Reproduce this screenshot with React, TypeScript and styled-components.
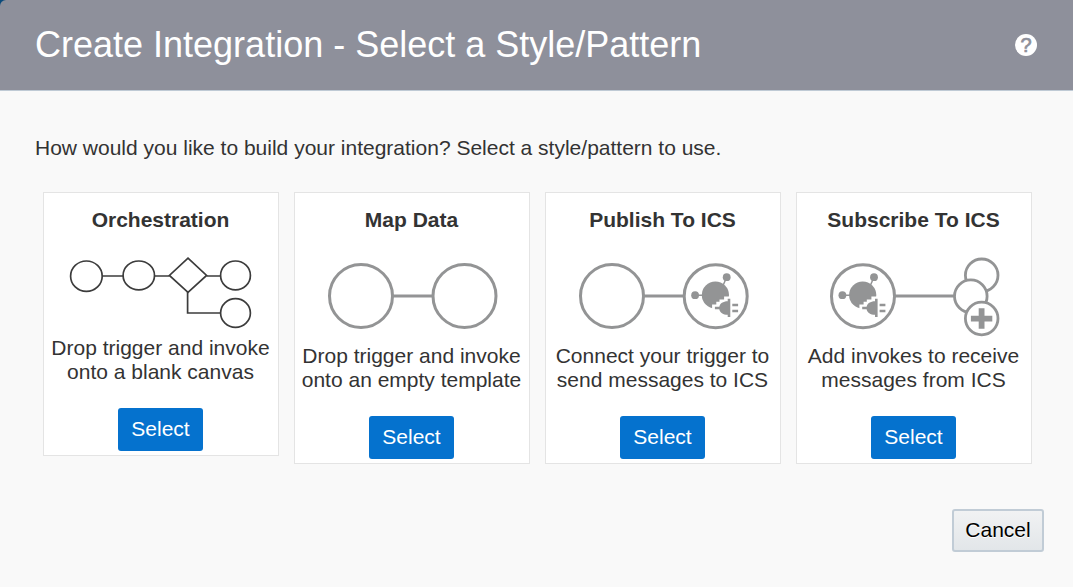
import React from 'react';
import styled, { createGlobalStyle } from 'styled-components';

const GlobalStyle = createGlobalStyle`
  * { box-sizing: border-box; }
  body {
    margin: 0;
    background: #f9f9f9;
    font-family: "Liberation Sans", Arial, sans-serif;
    font-size: 21px;
    line-height: 24px;
    color: #333;
  }
`;

const Dialog = styled.div`
  display: flex;
  flex-direction: column;
  width: 1073px;
  height: 587px;
  background: #f9f9f9;
`;

const HeaderBackdrop = styled.div`
  background: #0b4a7a;
`;

const Header = styled.header`
  display: flex;
  align-items: center;
  justify-content: space-between;
  height: 91px;
  padding: 0 36px 0 35px;
  background: #8e909b;
  border-bottom: 1px solid #bfcad5;
  border-top-left-radius: 6px;
`;

const Title = styled.h1`
  margin: 0;
  font-size: 36px;
  font-weight: 400;
  line-height: 42px;
  color: #fff;
`;

const HelpButton = styled.button`
  display: flex;
  align-items: center;
  justify-content: center;
  width: 22px;
  height: 22px;
  padding: 0;
  border: 0;
  border-radius: 50%;
  background: #fff;
  color: #8e909b;
  font: 20px/22px "Liberation Sans", Arial, sans-serif;
  -webkit-text-stroke: 0.7px #8e909b;
`;

const Body = styled.main`
  display: flex;
  flex: 1;
  flex-direction: column;
  padding: 45px 29px 35px 35px;
`;

const Intro = styled.p`
  margin: 0;
`;

const Cards = styled.div`
  display: flex;
  align-items: flex-start;
  gap: 15px;
  padding: 32px 0 0 8px;
`;

const Card = styled.section`
  display: flex;
  flex-direction: column;
  align-items: center;
  width: 236px;
  padding: 15px 1px 4px 0;
  border: 1px solid #e4e4e4;
  background: #fff;
`;

const CardTitle = styled.h2`
  margin: 0;
  font-size: 21px;
  font-weight: 700;
  line-height: 24px;
`;

const Art = styled.svg`
  display: block;
  align-self: flex-start;
  width: 234px;
  flex: none;
`;

const Description = styled.p`
  margin: 0 0 24px;
  text-align: center;
  white-space: pre-line;
`;

const SelectButton = styled.button`
  width: 85px;
  height: 43px;
  padding: 0 0 2px;
  border: 0;
  border-radius: 3px;
  background: #0572ce;
  color: #fff;
  font: 21px/41px "Liberation Sans", Arial, sans-serif;
`;

const Footer = styled.footer`
  display: flex;
  justify-content: flex-end;
  margin-top: auto;
`;

const CancelButton = styled.button`
  width: 92px;
  height: 43px;
  padding: 0 0 2px;
  border: 2px solid #c1ccd6;
  border-radius: 3px;
  background: linear-gradient(#f1f2f3, #e2e6e9);
  color: #000;
  font: 21px/37px "Liberation Sans", Arial, sans-serif;
  text-shadow: 0 1px 0 #fff;
`;

const GREY = '#939495';

function OrchestrationArt() {
  return (
    <Art height="104" viewBox="0 0 234 104" fill="none" stroke="#3c3c3c" strokeWidth="1.7">
      <ellipse cx="42.4" cy="44.2" rx="15.8" ry="15.2" />
      <ellipse cx="94.8" cy="43.4" rx="15.7" ry="14.4" />
      <ellipse cx="191.5" cy="43.4" rx="14.9" ry="14.4" />
      <ellipse cx="191.5" cy="81" rx="14.9" ry="14.4" />
      <path d="M144 26.2 162.6 43.4 144 60.4 125.4 43.4Z" />
      <path d="M58.5 44H79M110.5 44h15M162.6 44h14M143.6 60v21h33" />
    </Art>
  );
}

function MapArt() {
  return (
    <Art height="112" viewBox="0 0 234 112" fill="none" stroke={GREY} strokeWidth="3">
      <circle cx="66" cy="64" r="31.5" />
      <circle cx="169.5" cy="64" r="31.5" />
      <path d="M98 64h40" />
    </Art>
  );
}

function ServiceNode({ x, y }: { x: number; y: number }) {
  return (
    <g transform={`translate(${x} ${y})`}>
      <circle r="31.5" fill="#fff" stroke={GREY} strokeWidth="3" />
      <g fill={GREY}>
        <circle cx="-.3" cy="-1.2" r="13.6" />
        <circle cx="-20.6" cy="-1" r="3.9" />
        <circle cx="11" cy="-19" r="3.9" />
      </g>
      <path d="M-20-1h8M10.5-18 7-10" stroke={GREY} strokeWidth="1.5" />
      <path d="M-3.6 14V8.2h4.2V5.6h3.2V3.2h4.6V.4h8V22H-3.6z" fill="#fff" />
      <path d="M-.8 10.6h4.4C4.2 7.2 7.4 5 12 5V2.6h2.6v18.2H12v-2.2c-4.6 0-7.8-2.2-8.4-5.6H-.8z" fill={GREY} />
      <path d="M16.6 8.8h5.8M16.6 14.8h5.8" stroke={GREY} strokeWidth="2.5" />
    </g>
  );
}

function PublishArt() {
  return (
    <Art height="112" viewBox="0 0 234 112" fill="none">
      <circle cx="66" cy="64" r="31.5" stroke={GREY} strokeWidth="3" />
      <path d="M98 64h40" stroke={GREY} strokeWidth="3" />
      <ServiceNode x={169.7} y={64.2} />
    </Art>
  );
}

function SubscribeArt() {
  return (
    <Art height="112" viewBox="0 0 234 112" fill="none">
      <path d="M98 64h60" stroke={GREY} strokeWidth="3" />
      <ServiceNode x={66} y={64.2} />
      <g fill="#fff" stroke={GREY} strokeWidth="2.8">
        <circle cx="184.7" cy="43.3" r="16.3" />
        <circle cx="173.8" cy="64.2" r="16.3" />
        <circle cx="184.7" cy="86.5" r="16.3" />
      </g>
      <path d="M173.9 86.6h21.4M184.6 76.2v20.6" stroke={GREY} strokeWidth="5.8" />
    </Art>
  );
}

const patterns = [
  { title: 'Orchestration', text: 'Drop trigger and invoke\nonto a blank canvas', Picture: OrchestrationArt },
  { title: 'Map Data', text: 'Drop trigger and invoke\nonto an empty template', Picture: MapArt },
  { title: 'Publish To ICS', text: 'Connect your trigger to\nsend messages to ICS', Picture: PublishArt },
  { title: 'Subscribe To ICS', text: 'Add invokes to receive\nmessages from ICS', Picture: SubscribeArt },
];

export default function App() {
  return (
    <>
      <GlobalStyle />
      <Dialog>
        <HeaderBackdrop>
          <Header>
            <Title>Create Integration - Select a Style/Pattern</Title>
            <HelpButton>?</HelpButton>
          </Header>
        </HeaderBackdrop>
        <Body>
          <Intro>How would you like to build your integration? Select a style/pattern to use.</Intro>
          <Cards>
            {patterns.map(({ title, text, Picture }) => (
              <Card key={title}>
                <CardTitle>{title}</CardTitle>
                <Picture />
                <Description>{text}</Description>
                <SelectButton>Select</SelectButton>
              </Card>
            ))}
          </Cards>
          <Footer>
            <CancelButton>Cancel</CancelButton>
          </Footer>
        </Body>
      </Dialog>
    </>
  );
}
